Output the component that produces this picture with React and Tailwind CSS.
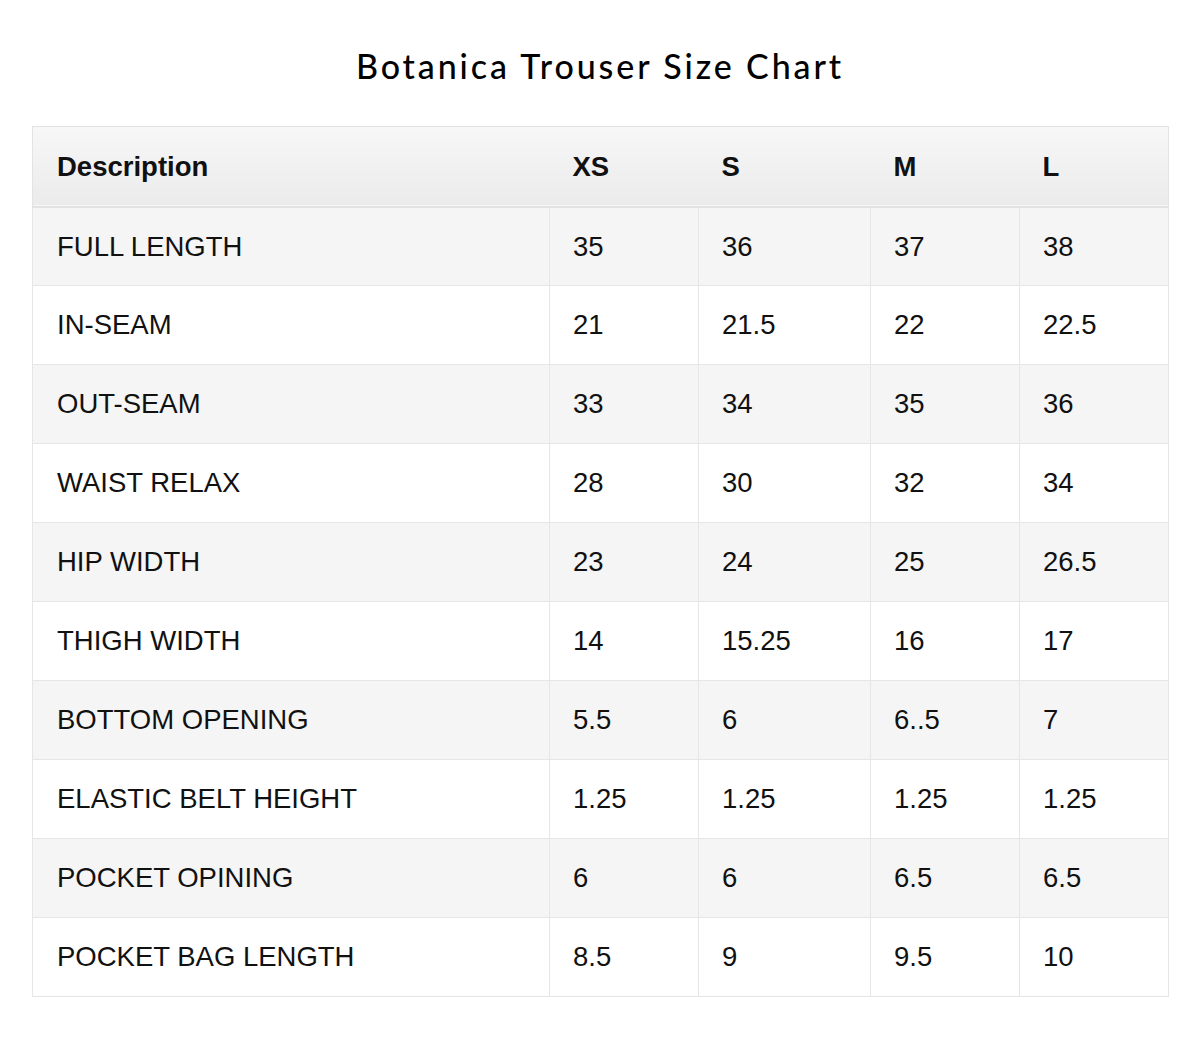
const rows = [
  ["FULL LENGTH", "35", "36", "37", "38"],
  ["IN-SEAM", "21", "21.5", "22", "22.5"],
  ["OUT-SEAM", "33", "34", "35", "36"],
  ["WAIST RELAX", "28", "30", "32", "34"],
  ["HIP WIDTH", "23", "24", "25", "26.5"],
  ["THIGH WIDTH", "14", "15.25", "16", "17"],
  ["BOTTOM OPENING", "5.5", "6", "6..5", "7"],
  ["ELASTIC BELT HEIGHT", "1.25", "1.25", "1.25", "1.25"],
  ["POCKET OPINING", "6", "6", "6.5", "6.5"],
  ["POCKET BAG LENGTH", "8.5", "9", "9.5", "10"],
];

const sizes = ["XS", "S", "M", "L"];

export default function App() {
  return (
    <div className="min-h-[1038px] w-[1200px] bg-white text-[#111]">
      <h1 className="pt-[44px] text-center font-['Lato','Noto_Sans',sans-serif] text-[34px] font-medium leading-[44px] tracking-[2.9px] text-black">
        Botanica Trouser Size Chart
      </h1>

      <div className="mx-[32px] mt-[38px] font-['Liberation_Sans',Arial,sans-serif] text-[27.5px]">
        <table className="w-[1136px] table-fixed border-collapse border border-[#e3e3e3]">
          <colgroup>
            <col className="w-[517px]" />
            <col className="w-[149px]" />
            <col className="w-[172px]" />
            <col className="w-[149px]" />
            <col className="w-[149px]" />
          </colgroup>
          <thead>
            <tr className="h-[80px] border-b-2 border-[#e2e2e2] bg-gradient-to-b from-[#f7f7f7] to-[#ebebeb]">
              <th className="pl-[24px] text-left font-bold">Description</th>
              {sizes.map((s) => (
                <th key={s} className="pl-[23px] text-left font-bold">
                  {s}
                </th>
              ))}
            </tr>
          </thead>
          <tbody>
            {rows.map((r, i) => (
              <tr key={r[0]} className={`h-[79px] ${i % 2 === 0 ? "bg-[#f5f5f5]" : "bg-white"}`}>
                {r.map((cell, j) => (
                  <td
                    key={j}
                    className={`border border-[#e6e6e6] ${j === 0 ? "pl-[24px]" : "pl-[23px]"}`}
                  >
                    {cell}
                  </td>
                ))}
              </tr>
            ))}
          </tbody>
        </table>
      </div>
    </div>
  );
}
